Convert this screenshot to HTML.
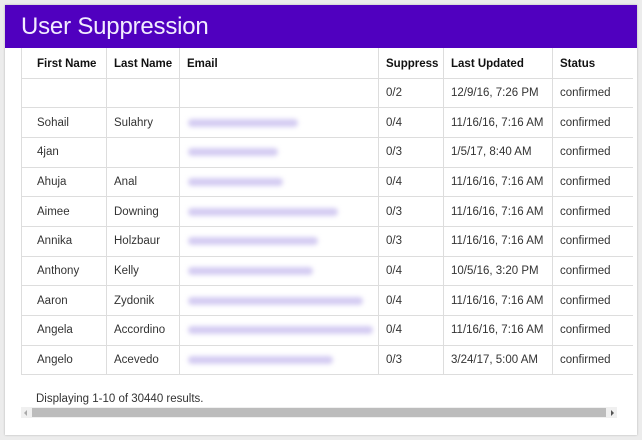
<!DOCTYPE html>
<html><head><style>
body{margin:0;width:642px;height:440px;background:#ececec;font-family:"Liberation Sans",sans-serif;overflow:hidden;position:relative}
.card{position:absolute;left:5px;top:5px;width:632px;height:430px;background:#fff;box-shadow:0 0 2px rgba(0,0,0,.25)}
.hdr{position:absolute;left:0;top:0;width:632px;height:43px;background:#5000bf;color:#f2ecff;font-size:24px;line-height:43px;padding-left:16px;box-sizing:border-box;font-weight:300;letter-spacing:-.2px}
table{position:absolute;left:16px;top:43px;border-collapse:collapse;font-size:11.5px;color:#333}
td,th{border:1px solid #ddd;height:29.7px;padding:0 0 0 7px;text-align:left;box-sizing:border-box;white-space:nowrap}
td:first-child,th:first-child{padding-left:15px}
th{color:#111;height:30px;border-top:none;padding-top:3px}
td:last-child,th:last-child{border-right:none}
.b{display:inline-block;height:8px;background:#d4ccf2;border-radius:4px;filter:blur(2.5px);vertical-align:middle}
td.e{padding-left:8px;vertical-align:middle}
.foot{position:absolute;left:31px;top:388px;font-size:11.5px;color:#333}
.sb{position:absolute;left:16px;top:402px;width:596px;height:11px;background:#f0f0f0}
.sb .t{position:absolute;left:11px;top:1px;width:574px;height:9px;background:#bcbcbc}
.sb .l,.sb .r{position:absolute;top:3px;width:0;height:0;border-top:3px solid transparent;border-bottom:3px solid transparent}
.sb .l{left:3px;border-right:3px solid #aaa}
.sb .r{right:3px;border-left:3px solid #555}
</style></head><body>
<div class="card">
<div class="hdr">User Suppression</div>
<table>
<tr><th style="width:85px">First Name</th><th style="width:73px">Last Name</th><th style="width:199px">Email</th><th style="width:65px">Suppress</th><th style="width:109px">Last Updated</th><th style="width:80px">Status</th></tr>
<tr><td></td><td></td><td></td><td>0/2</td><td>12/9/16, 7:26 PM</td><td>confirmed</td></tr>
<tr><td>Sohail</td><td>Sulahry</td><td class="e"><span class="b" style="width:110px"></span></td><td>0/4</td><td>11/16/16, 7:16 AM</td><td>confirmed</td></tr>
<tr><td>4jan</td><td></td><td class="e"><span class="b" style="width:90px"></span></td><td>0/3</td><td>1/5/17, 8:40 AM</td><td>confirmed</td></tr>
<tr><td>Ahuja</td><td>Anal</td><td class="e"><span class="b" style="width:95px"></span></td><td>0/4</td><td>11/16/16, 7:16 AM</td><td>confirmed</td></tr>
<tr><td>Aimee</td><td>Downing</td><td class="e"><span class="b" style="width:150px"></span></td><td>0/3</td><td>11/16/16, 7:16 AM</td><td>confirmed</td></tr>
<tr><td>Annika</td><td>Holzbaur</td><td class="e"><span class="b" style="width:130px"></span></td><td>0/3</td><td>11/16/16, 7:16 AM</td><td>confirmed</td></tr>
<tr><td>Anthony</td><td>Kelly</td><td class="e"><span class="b" style="width:125px"></span></td><td>0/4</td><td>10/5/16, 3:20 PM</td><td>confirmed</td></tr>
<tr><td>Aaron</td><td>Zydonik</td><td class="e"><span class="b" style="width:175px"></span></td><td>0/4</td><td>11/16/16, 7:16 AM</td><td>confirmed</td></tr>
<tr><td>Angela</td><td>Accordino</td><td class="e"><span class="b" style="width:185px"></span></td><td>0/4</td><td>11/16/16, 7:16 AM</td><td>confirmed</td></tr>
<tr><td>Angelo</td><td>Acevedo</td><td class="e"><span class="b" style="width:145px"></span></td><td>0/3</td><td>3/24/17, 5:00 AM</td><td>confirmed</td></tr>
</table>
<div class="foot">Displaying 1-10 of 30440 results.</div>
<div class="sb"><div class="l"></div><div class="t"></div><div class="r"></div></div>
</div>
</body></html>
